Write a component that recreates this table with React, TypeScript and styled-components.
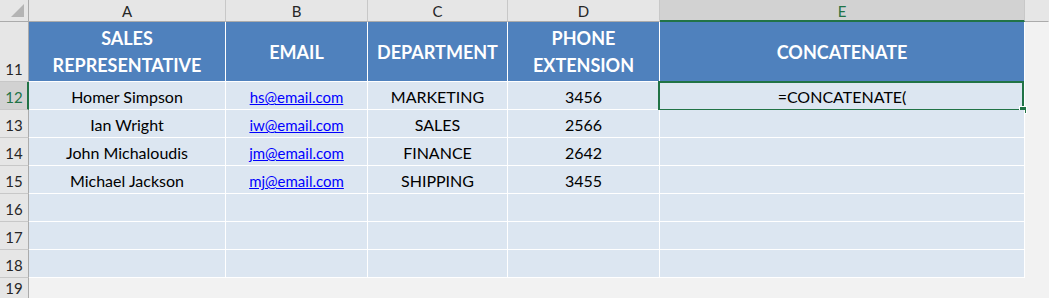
import React from 'react';
import styled, { createGlobalStyle } from 'styled-components';

const GlobalStyle = createGlobalStyle`
  html, body {
    margin: 0;
    padding: 0;
    background: #f2f2f2;
  }
  #root {
    height: 298px;
  }
`;

const FONT = `Lato, 'Open Sans', 'Liberation Sans', sans-serif`;
const GREEN = '#217346';

const COLUMNS = ['A', 'B', 'C', 'D', 'E'];
const SELECTED_COL = 'E';

const HEADERS = [
  ['SALES', 'REPRESENTATIVE'],
  ['EMAIL'],
  ['DEPARTMENT'],
  ['PHONE', 'EXTENSION'],
  ['CONCATENATE'],
];

const ROWS = [
  { name: 'Homer Simpson', email: 'hs@email.com', dept: 'MARKETING', ext: '3456' },
  { name: 'Ian Wright', email: 'iw@email.com', dept: 'SALES', ext: '2566' },
  { name: 'John Michaloudis', email: 'jm@email.com', dept: 'FINANCE', ext: '2642' },
  { name: 'Michael Jackson', email: 'mj@email.com', dept: 'SHIPPING', ext: '3455' },
  null,
  null,
  null,
];

export default function App() {
  return (
    <>
      <GlobalStyle />
      <S.Sheet>
        <S.Corner>
          <svg width='14' height='14' viewBox='0 0 14 14'>
            <polygon points='13,0 13,13 0,13' fill='#b4b4b4' />
          </svg>
        </S.Corner>
        {COLUMNS.map((c) => (
          <S.ColHeader key={c} $selected={c === SELECTED_COL}>
            {c}
          </S.ColHeader>
        ))}
        <S.ColHeader $filler />

        <S.RowHeader>11</S.RowHeader>
        {HEADERS.map((lines, i) => (
          <S.HeaderCell key={i}>
            {lines.map((l) => (
              <span key={l}>{l}</span>
            ))}
          </S.HeaderCell>
        ))}
        <S.Blank />

        {ROWS.map((row, i) => {
          const num = 12 + i;
          const selected = num === 12;
          return (
            <React.Fragment key={num}>
              <S.RowHeader $selected={selected}>{num}</S.RowHeader>
              <S.Cell>{row?.name}</S.Cell>
              <S.Cell>{row && <S.Link>{row.email}</S.Link>}</S.Cell>
              <S.Cell>{row?.dept}</S.Cell>
              <S.Cell>{row?.ext}</S.Cell>
              <S.Cell>
                {selected && '=CONCATENATE('}
                {selected && (
                  <S.Selection>
                    <S.FillHandle />
                  </S.Selection>
                )}
              </S.Cell>
              <S.Blank />
            </React.Fragment>
          );
        })}

        <S.RowHeader>19</S.RowHeader>
        <S.Blank $span={6} />
      </S.Sheet>
    </>
  );
}

const S = {
  Sheet: styled.div`
    display: grid;
    grid-template-columns: 29px 197px 142px 140px 152px 365px 1fr;
    grid-template-rows: 22px 60px repeat(7, 28px) 1fr;
    width: 1049px;
    height: 298px;
    overflow: hidden;
    background: #f2f2f2;
    font-family: ${FONT};
  `,
  Corner: styled.div`
    box-sizing: border-box;
    background: #e6e6e6;
    border-right: 1px solid #ababab;
    border-bottom: 1px solid #ababab;
    display: flex;
    align-items: flex-end;
    justify-content: flex-end;
    padding: 0 3px 3px 0;
  `,
  ColHeader: styled.div<{ $selected?: boolean; $filler?: boolean }>`
    box-sizing: border-box;
    display: flex;
    align-items: center;
    justify-content: center;
    font-size: 15px;
    color: ${(p) => (p.$selected ? GREEN : '#262626')};
    background: ${(p) => (p.$selected ? '#d2d2d2' : '#e6e6e6')};
    border-right: 1px solid ${(p) => (p.$filler ? 'transparent' : '#c8c8c8')};
    border-bottom: ${(p) => (p.$selected ? `2px solid ${GREEN}` : '1px solid #ababab')};
    padding-top: ${(p) => (p.$selected ? '1px' : '0')};
  `,
  RowHeader: styled.div<{ $selected?: boolean }>`
    box-sizing: border-box;
    display: flex;
    align-items: flex-end;
    justify-content: center;
    padding-bottom: 2px;
    font-size: 15px;
    line-height: 20px;
    color: ${(p) => (p.$selected ? GREEN : '#262626')};
    background: ${(p) => (p.$selected ? '#d2d2d2' : '#e6e6e6')};
    border-right: ${(p) => (p.$selected ? `2px solid ${GREEN}` : '1px solid #ababab')};
    border-bottom: 1px solid #c8c8c8;
    padding-left: ${(p) => (p.$selected ? '1px' : '0')};
  `,
  HeaderCell: styled.div`
    box-sizing: border-box;
    display: flex;
    flex-direction: column;
    align-items: center;
    justify-content: center;
    background: #4f81bd;
    color: #fff;
    font-weight: 700;
    font-size: 18px;
    line-height: 27px;
    border-right: 1px solid #fff;
    border-bottom: 1px solid #fff;
    padding-top: 1px;
  `,
  Cell: styled.div`
    position: relative;
    box-sizing: border-box;
    display: flex;
    align-items: flex-end;
    justify-content: center;
    padding-bottom: 2px;
    background: #dce6f1;
    color: #000;
    font-size: 16px;
    line-height: 20px;
    white-space: nowrap;
    border-right: 1px solid #fff;
    border-bottom: 1px solid #fff;
  `,
  Link: styled.span`
    color: #0000ff;
    text-decoration: underline;
    font-size: 15px;
  `,
  Blank: styled.div<{ $span?: number }>`
    background: #f2f2f2;
    grid-column: ${(p) => (p.$span ? `span ${p.$span}` : 'auto')};
  `,
  Selection: styled.div`
    position: absolute;
    top: -1px;
    left: -2px;
    right: 0;
    bottom: -2px;
    border: 2px solid ${GREEN};
    pointer-events: none;
  `,
  FillHandle: styled.div`
    position: absolute;
    right: -5px;
    bottom: -5px;
    width: 6px;
    height: 6px;
    background: ${GREEN};
    border: 1px solid #fff;
  `,
};
